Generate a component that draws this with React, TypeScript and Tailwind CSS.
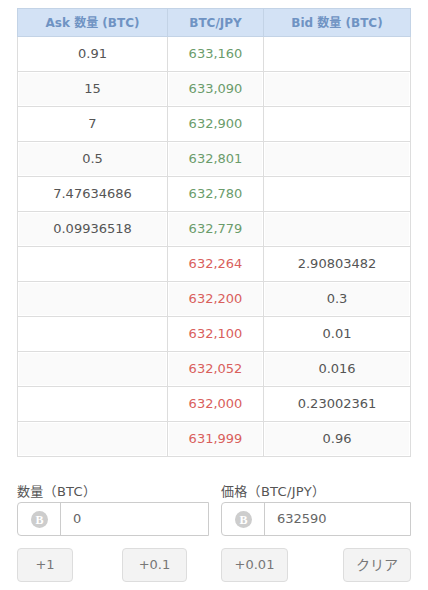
import React from "react";

const asks = [
  ["0.91", "633,160"],
  ["15", "633,090"],
  ["7", "632,900"],
  ["0.5", "632,801"],
  ["7.47634686", "632,780"],
  ["0.09936518", "632,779"],
];

const bids = [
  ["632,264", "2.90803482"],
  ["632,200", "0.3"],
  ["632,100", "0.01"],
  ["632,052", "0.016"],
  ["632,000", "0.23002361"],
  ["631,999", "0.96"],
];

const CoinIcon = () => (
  <svg width="17" height="17" viewBox="0 0 17 17">
    <circle cx="8.5" cy="8.5" r="8.5" fill="#cdcdcd" />
    <text
      x="8.5"
      y="12.5"
      textAnchor="middle"
      fontSize="12"
      fontWeight="700"
      fontFamily="'Liberation Serif', serif"
      fill="#ffffff"
    >
      B
    </text>
  </svg>
);

const Field = ({ label, value, className }: { label: string; value: string; className: string }) => (
  <div className={className}>
    <div className="h-[19px] text-[13px] leading-[18px] tracking-[0.3px] text-[#555]">{label}</div>
    <div className="flex h-[34px] rounded-l-[4px] border border-[#ccc] bg-white">
      <div className="flex w-[43px] items-center justify-center border-r border-[#ccc]">
        <CoinIcon />
      </div>
      <div className="flex flex-1 items-center pl-[12px] text-[13px] text-[#666]">{value}</div>
    </div>
  </div>
);

const Btn = ({ label, className }: { label: string; className: string }) => (
  <button className={`h-[34px] rounded-[4px] border border-[#ddd] bg-[#f3f3f3] text-[#777] ${className}`}>
    {label}
  </button>
);

const cell = "border border-[#ddd] [tr:nth-child(even)>&]:bg-[#fafafa] [tr:nth-child(even)>&]:shadow-[inset_0_0_0_1px_#fff]";

export default function App() {
  return (
    <div className="h-[590px] w-[428px] overflow-hidden bg-white pl-[17px] pt-[8px] font-['DejaVu_Sans','Noto_Sans_CJK_JP',sans-serif]">
      <table className="w-[394px] table-fixed border-collapse text-center text-[13px] text-[#555]">
        <thead>
          <tr className="h-[28px] bg-[#d3e2f5] text-[12px] font-bold text-[#6f93c3]">
            <th className="w-[150px] border border-[#c3d3e6]">Ask 数量 (BTC)</th>
            <th className="w-[96px] border border-[#c3d3e6]">BTC/JPY</th>
            <th className="border border-[#c3d3e6]">Bid 数量 (BTC)</th>
          </tr>
        </thead>
        <tbody>
          {asks.map(([qty, price]) => (
            <tr key={price} className="h-[35px]">
              <td className={cell}>{qty}</td>
              <td className={`${cell} text-[#6b9c6b]`}>{price}</td>
              <td className={cell}></td>
            </tr>
          ))}
          {bids.map(([price, qty]) => (
            <tr key={price} className="h-[35px]">
              <td className={cell}></td>
              <td className={`${cell} text-[#d9605c]`}>{price}</td>
              <td className={cell}>{qty}</td>
            </tr>
          ))}
        </tbody>
      </table>
      <div className="mt-[26px] flex w-[394px] gap-[12px]">
        <Field label="数量（BTC）" value="0" className="w-[192px]" />
        <Field label="価格（BTC/JPY）" value="632590" className="w-[190px]" />
      </div>
      <div className="mt-[12px] flex w-[394px]">
        <Btn label="+1" className="w-[56px] text-[13px]" />
        <Btn label="+0.1" className="ml-[49px] w-[65px] text-[13px]" />
        <Btn label="+0.01" className="ml-[34px] w-[67px] text-[13px]" />
        <Btn label="クリア" className="ml-auto w-[68px] text-[14px]" />
      </div>
    </div>
  );
}
